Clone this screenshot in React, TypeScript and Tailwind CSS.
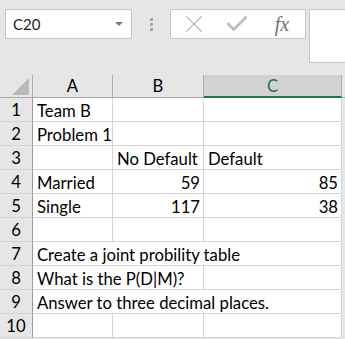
import React from 'react';
import { X, Check } from 'lucide-react';

type Row = { n: number; cells: { text: string; span?: number; right?: boolean }[] };

const rows: Row[] = [
  { n: 1, cells: [{ text: 'Team B' }, { text: '' }, { text: '' }] },
  { n: 2, cells: [{ text: 'Problem 1' }, { text: '' }, { text: '' }] },
  { n: 3, cells: [{ text: '' }, { text: 'No Default' }, { text: 'Default' }] },
  { n: 4, cells: [{ text: 'Married' }, { text: '59', right: true }, { text: '85', right: true }] },
  { n: 5, cells: [{ text: 'Single' }, { text: '117', right: true }, { text: '38', right: true }] },
  { n: 6, cells: [{ text: '' }, { text: '' }, { text: '' }] },
  { n: 7, cells: [{ text: 'Create a joint probility table', span: 3 }] },
  { n: 8, cells: [{ text: 'What is the P(D|M)?', span: 2 }, { text: '' }] },
  { n: 9, cells: [{ text: 'Answer to three decimal places.', span: 3 }] },
  { n: 10, cells: [{ text: '' }, { text: '' }, { text: '' }] },
];

const spanClass: Record<number, string> = { 1: '', 2: 'col-span-2', 3: 'col-span-3' };

const App: React.FC = () => {
  return (
    <div className="w-[345px] h-[339px] overflow-hidden bg-[#e6e6e6] text-black" style={{ fontFamily: 'Lato, "Liberation Sans", sans-serif' }}>
      {/* formula bar */}
      <div className="h-[75px] flex items-start pt-[9px] pl-[5px]">
        <div className="w-[127px] h-[30px] bg-white border border-[#c6c6c6] flex items-center justify-between pl-[7px] pr-[8px]">
          <span className="text-[15px] text-[#222]">C20</span>
          <span className="w-0 h-0 border-l-[4px] border-r-[4px] border-t-[4px] border-l-transparent border-r-transparent border-t-[#7a7a7a]" />
        </div>
        <div className="w-[38px] h-[30px] flex flex-col items-center justify-center gap-[2px]">
          <span className="w-[3px] h-[3px] bg-[#a6a6a6]" />
          <span className="w-[3px] h-[3px] bg-[#a6a6a6]" />
          <span className="w-[3px] h-[3px] bg-[#a6a6a6]" />
        </div>
        <div className="w-[136px] h-[30px] bg-white border border-[#c6c6c6] flex items-center">
          <div className="w-[44px] flex justify-center pl-[1px]">
            <X className="w-[30px] h-[30px] text-[#bdbdbd]" strokeWidth={1.1} />
          </div>
          <div className="w-[44px] flex justify-center">
            <Check className="w-[26px] h-[26px] text-[#bdbdbd]" strokeWidth={2.6} />
          </div>
          <div className="w-[44px] flex justify-center pl-[2px]">
            <span className="italic text-[20px] leading-none text-[#6f6f6f]" style={{ fontFamily: '"Liberation Serif", serif' }}>
              fx
            </span>
          </div>
        </div>
        <div className="ml-[3px] flex-1 h-[54px] bg-white border border-[#c6c6c6] border-r-0" />
      </div>

      {/* grid */}
      <div className="grid grid-cols-[33px_80px_91px_138px_3px] text-[16.7px]">
        {/* header */}
        <div className="h-[23px] border-r border-b border-[#ababab] flex items-end justify-end pr-[3px] pb-[2px]">
          <svg width="17" height="17" viewBox="0 0 17 17">
            <polygon points="17,0 17,17 0,17" fill="#b9b9b9" />
          </svg>
        </div>
        <div className="h-[23px] border-r border-b border-[#ababab] flex items-center justify-center leading-none pt-[1px]">A</div>
        <div className="h-[23px] border-r border-b border-[#ababab] flex items-center justify-center leading-none pt-[1px]">B</div>
        <div className="h-[23px] bg-[#d2d2d2] border-r border-[#ababab] border-b-2 border-b-[#217346] flex items-center justify-center leading-none pt-[2px] text-[#217346]">
          C
        </div>
        <div className="h-[23px] border-b border-[#ababab]" />

        {rows.map((row) => (
          <React.Fragment key={row.n}>
            <div className="h-[24px] border-r border-r-[#9b9b9b] border-b border-b-[#d4d4d4] flex items-center justify-center leading-[23px] pt-[2px]">
              {row.n}
            </div>
            {row.cells.map((c, i) => (
              <div
                key={i}
                className={`h-[24px] bg-white border-r border-b border-[#d4d4d4] leading-[22px] pt-[2px] whitespace-nowrap overflow-hidden ${
                  c.right ? 'text-right pr-[3px]' : 'pl-[4px]'
                } ${spanClass[c.span ?? 1]}`}
              >
                {c.text}
              </div>
            ))}
            <div className="h-[24px]" />
          </React.Fragment>
        ))}
      </div>
    </div>
  );
};

export default App;
